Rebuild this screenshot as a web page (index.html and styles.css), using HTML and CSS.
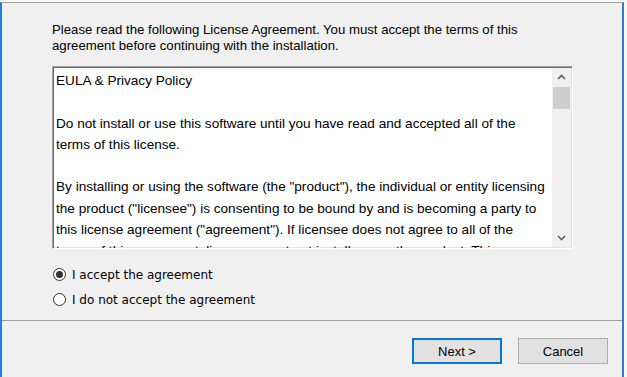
FILE: index.html
```html
<!DOCTYPE html>
<html lang="en">
<head>
    <meta charset="UTF-8">
    <meta name="viewport" content="width=device-width, initial-scale=1.0">
    <title>License Agreement</title>
    <link rel="stylesheet" href="styles.css">
</head>
<body>
    <div class="window">
        <div class="main">
            <p class="intro">Please read the following License Agreement. You must accept the terms of this<br>agreement before continuing with the installation.</p>

            <div class="licence">
                <div class="licence-text">
                    EULA &amp; Privacy Policy<br>
                    <br>
                    Do not install or use this software until you have read and accepted all of the<br>
                    terms of this license.<br>
                    <br>
                    By installing or using the software (the "product"), the individual or entity licensing<br>
                    the product ("licensee") is consenting to be bound by and is becoming a party to<br>
                    this license agreement ("agreement"). If licensee does not agree to all of the<br>
                    terms of this agreement, licensee must not install or use the product. This
                </div>
                <div class="scrollbar">
                    <div class="arrow">
                        <svg width="9" height="6" viewBox="0 0 9 6"><polyline points="1,5 4.5,1.5 8,5" fill="none" stroke="#606060" stroke-width="1.6"/></svg>
                    </div>
                    <div class="track">
                        <div class="thumb"></div>
                    </div>
                    <div class="arrow">
                        <svg width="9" height="6" viewBox="0 0 9 6"><polyline points="1,1 4.5,4.5 8,1" fill="none" stroke="#606060" stroke-width="1.6"/></svg>
                    </div>
                </div>
            </div>

            <div class="choices">
                <label class="choice"><span class="radio checked"></span>I accept the agreement</label>
                <label class="choice"><span class="radio"></span>I do not accept the agreement</label>
            </div>
        </div>

        <div class="footer">
            <button class="btn default">Next &gt;</button>
            <button class="btn">Cancel</button>
        </div>
    </div>
</body>
</html>
```

FILE: styles.css
```css
body {
    margin: 0;
    background: #f7f7f7;
    font-family: "Liberation Sans", Arial, sans-serif;
    color: #000;
}
.window {
    margin-top: 2px;
    width: 620px;
    height: 374px;
    background: #f0f0f0;
    border-top: 1px solid #a0a0a0;
    border-left: 2px solid #2b7cd6;
    border-right: 2px solid #2b7cd6;
}
.main {
    height: 317px;
    padding: 19px 0 0 50px;
    box-sizing: border-box;
}
.intro {
    margin: 0;
    font-size: 13.2px;
    line-height: 16px;
}
.licence {
    display: flex;
    margin-top: 12px;
    width: 521px;
    height: 183px;
    box-sizing: border-box;
    background: #fff;
    border-top: 1px solid #a0a0a0;
    border-left: 1px solid #a0a0a0;
    border-right: 1px solid #fff;
    border-bottom: 1px solid #fff;
    box-shadow: inset 1px 1px 0 #696969, inset -1px -1px 0 #e3e3e3;
}
.licence-text {
    flex: 1;
    overflow: hidden;
    padding: 3px 0 0 3px;
    font-size: 13.6px;
    line-height: 21.3px;
    white-space: nowrap;
}
.scrollbar {
    width: 19px;
    margin: 1px 1px 1px 0;
    display: flex;
    flex-direction: column;
    background: #f0f0f0;
}
.arrow {
    height: 18px;
    display: flex;
    align-items: center;
    justify-content: center;
}
.track {
    flex: 1;
    padding: 1px 1px 0;
}
.thumb {
    height: 22px;
    background: #cdcdcd;
}
.choices {
    margin-top: 13px;
}
.choice {
    display: flex;
    align-items: center;
    height: 25px;
    font-family: "DejaVu Sans", Verdana, sans-serif;
    font-size: 12px;
}
.radio {
    width: 11px;
    height: 11px;
    border: 1px solid #333;
    border-radius: 50%;
    background: #fff;
    margin: 0 6px 0 1px;
    display: flex;
    align-items: center;
    justify-content: center;
}
.radio.checked::after {
    content: "";
    width: 7px;
    height: 7px;
    border-radius: 50%;
    background: #333;
}
.footer {
    border-top: 1px solid #a0a0a0;
    display: flex;
    justify-content: flex-end;
    gap: 16px;
    padding: 17px 14px 0 0;
}
.btn {
    width: 90px;
    height: 26px;
    background: #e1e1e1;
    border: 1px solid #adadad;
    font-family: "Liberation Sans", Arial, sans-serif;
    font-size: 13px;
    color: #000;
    padding: 0;
}
.btn.default {
    border: 2px solid #0078d7;
}
```
